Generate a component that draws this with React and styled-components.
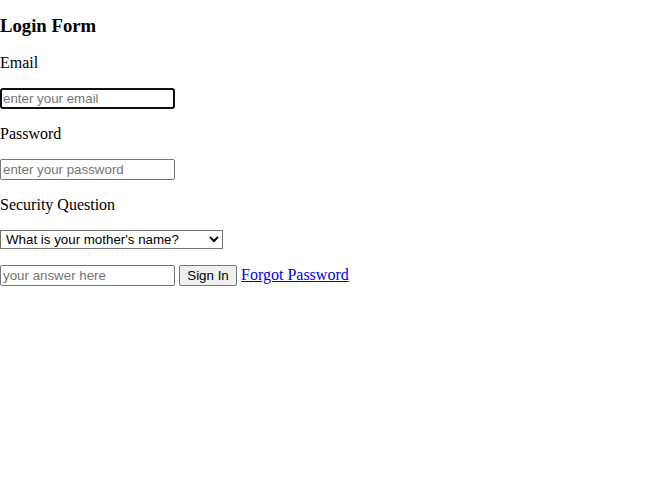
import styled, { createGlobalStyle } from 'styled-components';

const GlobalStyle = createGlobalStyle`
  body {
    margin: 0;
    background: #ffffff;
    color: #000000;
    font-family: "Liberation Serif", "Times New Roman", serif;
  }
`;

const Form = styled.form`
  display: flex;
  flex-direction: column;
  align-items: flex-start;
  gap: 16px;
  padding-top: 15px;
`;

const Title = styled.h3`
  margin: 0 0 1px;
  font-size: 18.72px;
  line-height: 22px;
  font-weight: bold;
`;

const Label = styled.label`
  display: block;
  font-size: 16px;
  line-height: 18px;
`;

const TextInput = styled.input`
  box-sizing: border-box;
  width: 175px;
  height: 21px;
  margin: 0;
  padding: 1px 2px;
  border: 1px solid #767676;
  border-radius: 2px;
  font-family: "Liberation Sans", Arial, sans-serif;
  font-size: 13.33px;
  color: #000000;
  background: #ffffff;
  outline: none;
  caret-color: #000000;

  &::placeholder {
    color: #757575;
  }

  ${(p) => p.$focused && `
    border: 2px solid #101010;
    border-radius: 3px;
    padding: 0 1px;
  `}
`;

const Select = styled.select`
  box-sizing: border-box;
  width: 223px;
  height: 19px;
  margin: 0;
  padding: 0 1px;
  border: 1px solid #767676;
  border-radius: 0;
  font-family: "Liberation Sans", Arial, sans-serif;
  font-size: 13.33px;
  color: #000000;
  background: #ffffff;
`;

const ActionRow = styled.div`
  display: flex;
  align-items: baseline;
  gap: 4px;
`;

const Button = styled.button`
  box-sizing: border-box;
  width: 58px;
  height: 21px;
  margin: 0;
  padding: 1px 6px;
  border: 1px solid #767676;
  border-radius: 2px;
  background: #efefef;
  font-family: "Liberation Sans", Arial, sans-serif;
  font-size: 13.33px;
  color: #000000;
`;

const Link = styled.a`
  font-size: 16px;
  color: #0000ee;
  text-decoration: underline;
`;

export default function App() {
  return (
    <>
      <GlobalStyle />
      <Form onSubmit={(e) => e.preventDefault()}>
        <Title>Login Form</Title>
        <Label htmlFor="email">Email</Label>
        <TextInput id="email" type="email" placeholder="enter your email" $focused autoFocus />
        <Label htmlFor="password">Password</Label>
        <TextInput id="password" type="password" placeholder="enter your password" />
        <Label htmlFor="question">Security Question</Label>
        <Select id="question" defaultValue="mother">
          <option value="mother">What is your mother's name?</option>
          <option value="pet">What was your first pet's name?</option>
          <option value="city">In which city were you born?</option>
        </Select>
        <ActionRow>
          <TextInput placeholder="your answer here" />
          <Button type="submit">Sign In</Button>
          <Link href="#">Forgot Password</Link>
        </ActionRow>
      </Form>
    </>
  );
}
